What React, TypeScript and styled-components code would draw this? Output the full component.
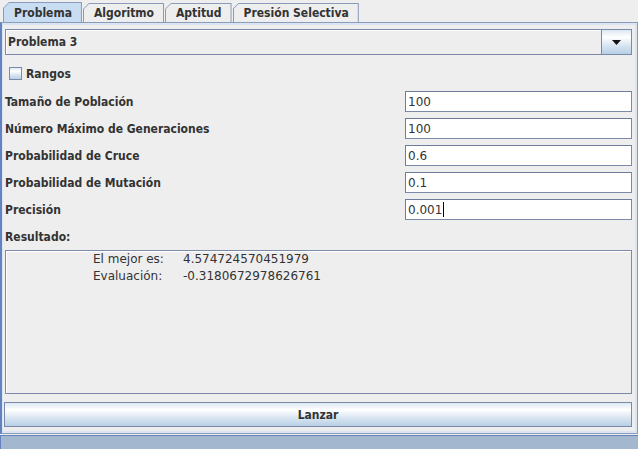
import styled, { createGlobalStyle } from "styled-components";

const GlobalStyle = createGlobalStyle`
  html, body {
    margin: 0;
    padding: 0;
    background: #eeeeee;
  }
`;

const tabs = ["Problema", "Algoritmo", "Aptitud", "Presión Selectiva"];

const fields = [
  { label: "Tamaño de Población", value: "100" },
  { label: "Número Máximo de Generaciones", value: "100" },
  { label: "Probabilidad de Cruce", value: "0.6" },
  { label: "Probabilidad de Mutación", value: "0.1" },
  { label: "Precisión", value: "0.001", focused: true },
];

const App = () => {
  return (
    <Window>
      <GlobalStyle />
      <TabBar>
        {tabs.map((t, i) => (
          <TabOuter key={t} $selected={i === 0}>
            <TabInner $selected={i === 0}>{t}</TabInner>
          </TabOuter>
        ))}
      </TabBar>
      <Panel>
        <Content>
          <Combo>
            <ComboText>Problema 3</ComboText>
            <ComboArrow>
              <svg width="9" height="5" viewBox="0 0 9 5">
                <polygon points="0,0 9,0 4.5,5" fill="#111" />
              </svg>
            </ComboArrow>
          </Combo>
          <CheckRow>
            <CheckBox />
            <BoldLabel>Rangos</BoldLabel>
          </CheckRow>
          <Fields>
            {fields.map((f) => (
              <FieldRow key={f.label}>
                <BoldLabel>{f.label}</BoldLabel>
                <TextField>
                  {f.value}
                  {f.focused && <Caret />}
                </TextField>
              </FieldRow>
            ))}
          </Fields>
          <ResultLabel>Resultado:</ResultLabel>
          <ResultBox>
            <ResultGrid>
              <span>El mejor es:</span>
              <span>4.574724570451979</span>
              <span>Evaluación:</span>
              <span>-0.3180672978626761</span>
            </ResultGrid>
          </ResultBox>
          <LaunchButton>Lanzar</LaunchButton>
        </Content>
      </Panel>
      <StatusBar />
    </Window>
  );
};

const condensed = `
  font-family: "DejaVu Sans Condensed", "DejaVu Sans", sans-serif;
  font-stretch: condensed;
  font-weight: bold;
  font-size: 12px;
  color: #333333;
`;

const plain = `
  font-family: "DejaVu Sans", sans-serif;
  font-size: 12px;
  color: #333333;
`;

const Window = styled.div`
  width: 638px;
  height: 449px;
  display: flex;
  flex-direction: column;
  background: #eeeeee;
  overflow: hidden;
`;

const TabBar = styled.div`
  display: flex;
  align-items: flex-end;
  height: 22px;
  padding-left: 3px;
  box-sizing: border-box;
`;

const TabOuter = styled.div<{ $selected: boolean }>`
  height: ${(p) => (p.$selected ? 20 : 19)}px;
  margin-right: 1px;
  background: #8a9cbc;
  clip-path: polygon(0 6px, 6px 0, 100% 0, 100% 100%, 0 100%);
  padding: 1px 1px 0 1px;
  box-sizing: border-box;
`;

const TabInner = styled.div<{ $selected: boolean }>`
  ${condensed}
  height: 100%;
  display: flex;
  align-items: center;
  padding: 0 9px 0 10px;
  background: ${(p) => (p.$selected ? "#c8ddf2" : "#eeeeee")};
  clip-path: polygon(0 5px, 5px 0, 100% 0, 100% 100%, 0 100%);
`;

const Panel = styled.div`
  border-top: 1px solid #8a9cbc;
  border-right: 1px solid #8a9cbc;
  border-bottom: 1px solid #8a9cbc;
  border-left: 2px solid #6382bf;
  padding: 2px 2px 2px 1px;
  background: #dae5f1;
  height: 412px;
  box-sizing: border-box;
  display: flex;
`;

const Content = styled.div`
  flex: 1;
  background: #eeeeee;
  display: flex;
  flex-direction: column;
  padding: 4px 3px 4px 2px;
`;

const Combo = styled.div`
  height: 26px;
  box-sizing: border-box;
  border: 1px solid #7a8aa8;
  display: flex;
  align-items: stretch;
  background: #eeeeee;
  box-shadow: inset 1px 1px 0 #ffffff;
`;

const ComboText = styled.div`
  ${condensed}
  flex: 1;
  display: flex;
  align-items: center;
  padding-left: 2px;
`;

const ComboArrow = styled.div`
  width: 29px;
  border-left: 1px solid #7a8aa8;
  display: flex;
  align-items: center;
  justify-content: center;
  background: linear-gradient(#dde8f3 0%, #ffffff 30%, #dde8f3 60%, #b8cfe5 100%);
  padding-top: 1px;
`;

const CheckRow = styled.div`
  display: flex;
  align-items: center;
  gap: 4px;
  height: 21px;
  margin-top: 8px;
  padding-left: 4px;
`;

const CheckBox = styled.div`
  width: 13px;
  height: 13px;
  box-sizing: border-box;
  border: 1px solid #7a8aa8;
  background: linear-gradient(#dde8f3 0%, #ffffff 30%, #dde8f3 60%, #b8cfe5 100%);
`;

const BoldLabel = styled.span`
  ${condensed}
`;

const Fields = styled.div`
  display: flex;
  flex-direction: column;
  gap: 6px;
  margin-top: 7px;
`;

const FieldRow = styled.div`
  display: flex;
  align-items: center;
  justify-content: space-between;
  height: 21px;
`;

const TextField = styled.div`
  ${plain}
  width: 227px;
  height: 21px;
  box-sizing: border-box;
  border: 1px solid #7a8aa8;
  border-top-color: #6d7d99;
  border-left-color: #6d7d99;
  background: #ffffff;
  display: flex;
  align-items: center;
  padding-left: 2px;
`;

const Caret = styled.span`
  width: 1px;
  height: 15px;
  background: #000000;
  margin-left: 1px;
`;

const ResultLabel = styled.div`
  ${condensed}
  height: 21px;
  display: flex;
  align-items: center;
  margin-top: 6px;
`;

const ResultBox = styled.div`
  flex: 1;
  margin-top: 3px;
  border: 1px solid #7a8aa8;
  box-shadow: inset 1px 1px 0 #ffffff;
`;

const ResultGrid = styled.div`
  ${plain}
  display: grid;
  grid-template-columns: 90px auto;
  row-gap: 2px;
  line-height: 15px;
  padding: 1px 0 0 87px;
`;

const LaunchButton = styled.div`
  ${condensed}
  height: 25px;
  margin-top: 8px;
  margin-left: -1px;
  box-sizing: border-box;
  border: 1px solid #7a8aa8;
  display: flex;
  align-items: center;
  justify-content: center;
  background: linear-gradient(#dde8f3 0%, #ffffff 30%, #dde8f3 60%, #b8cfe5 100%);
`;

const StatusBar = styled.div`
  flex: 1;
  margin-top: 1px;
  background: #a3b8cf;
  border-top: 1px solid #6382bf;
  border-left: 1px solid #6382bf;
`;

export default App;
